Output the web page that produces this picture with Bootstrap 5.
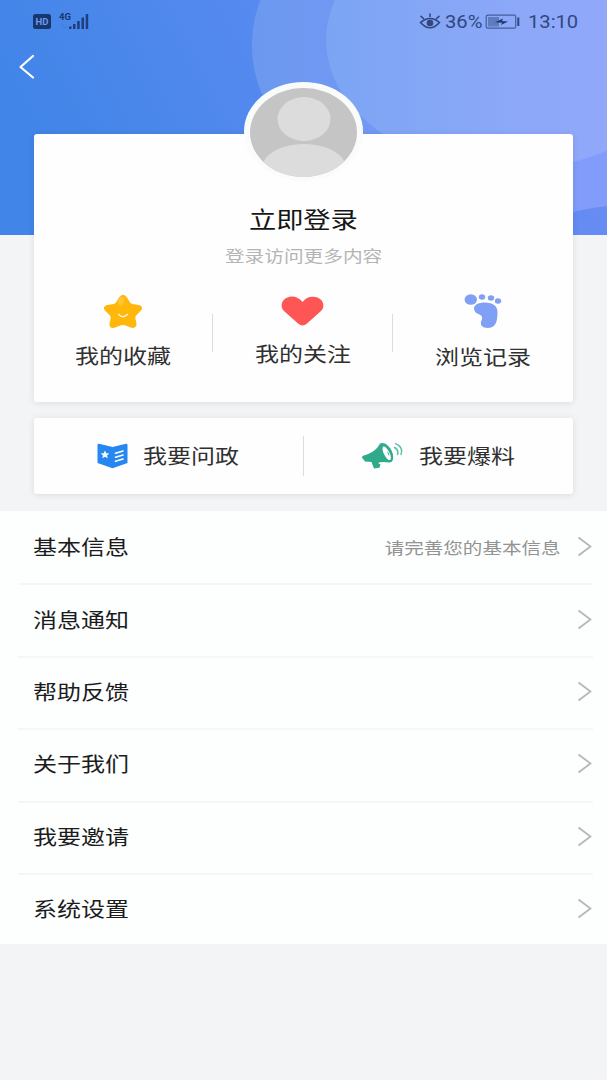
<!DOCTYPE html>
<html lang="zh-CN">
<head>
<meta charset="utf-8">
<meta name="viewport" content="width=device-width, initial-scale=1">
<title>我的</title>
<link href="https://cdn.jsdelivr.net/npm/bootstrap@5.3.0/dist/css/bootstrap.min.css" rel="stylesheet">
<style>
body{background:#f3f4f5;font-family:"Noto Sans CJK SC",sans-serif;color:#222;min-height:1080px;overflow-x:hidden}
svg{display:block;flex:none}
.hero{height:235px;margin-bottom:-101px}
.hero-bg{position:absolute;inset:0}
.status{height:43px;padding:0 34px 0 33px;color:#31477f;font-family:Roboto,sans-serif}
.hd{width:18px;height:15px;border-radius:2.5px;background:#17376f;color:#6d9af0;font:700 9.5px/15px Roboto,sans-serif;text-align:center}
.net{width:15px;height:22px;font:700 9.5px/10px Roboto,sans-serif;color:#17376f;padding-top:1px}
.net small{font-size:6px;line-height:8px;color:#3b66b8;display:block;padding-left:2px}
/* wide lettering: every label is set 1.2 times its normal width */
.wide{display:inline-block;white-space:nowrap;transform:scaleX(1.2);line-height:1}
.wide-s{transform-origin:left}
.wide-e{transform-origin:right}
.stat-txt{font-size:18px;line-height:43px;display:inline-block;transform:scaleX(1.12);transform-origin:left;white-space:nowrap}
.panel{margin:0 34px;border:0;border-radius:3px;background:#fefefe;box-shadow:0 1px 7px rgba(0,0,0,.10)}
.login{height:268px}
.avatar{margin-top:-52px}
.title{font-size:22.7px;color:#161616}
.sub{font-size:16.4px;color:#b5b5b5}
.lbl{font-size:20px;color:#303030}
.rule{width:1px;background:#dcdcdc}
.actions{height:76px;margin-top:16px}
.menu{margin-top:17px;background:#fdfefe;height:433px}
.menu .item{height:72.4px;padding:0 15px 0 33px}
.menu .item+.item{background:linear-gradient(#f5f6f6,#f5f6f6) 18px 0/575px 2px no-repeat}
.menu .lbl{color:#1c1c1c}
.hint{font-size:16.3px;color:#939393}
</style>
</head>
<body>
<header class="hero position-relative">
  <svg class="hero-bg" width="607" height="235" viewBox="0 0 607 235">
    <defs>
      <linearGradient id="g0" x1="0" x2="1" y1=".2" y2="0"><stop offset="0" stop-color="#4285e8"/><stop offset=".45" stop-color="#578af0"/><stop offset="1" stop-color="#6f8df5"/></linearGradient>
      <linearGradient id="g1" x1="0" x2="1"><stop offset="0" stop-color="#6c99ef"/><stop offset=".25" stop-color="#7298f4"/><stop offset="1" stop-color="#829cfa"/></linearGradient>
      <linearGradient id="g2" x1="0" x2="1"><stop offset="0" stop-color="#7ba5f3"/><stop offset=".5" stop-color="#8ca8f8"/><stop offset="1" stop-color="#96a8fc"/></linearGradient>
    </defs>
    <rect width="607" height="235" fill="url(#g0)"/>
    <ellipse cx="480" cy="45" rx="228" ry="168" fill="url(#g1)"/>
    <path d="M560 130H607V206Q585 208 560 216Z" fill="#819cfa"/>
    <ellipse cx="510" cy="40" rx="184" ry="130" fill="url(#g2)"/>
  </svg>
  <div class="status position-relative d-flex align-items-center">
    <div class="hd">HD</div>
    <div class="net ms-2 ps-0">4G<small>↑↓</small></div>
    <svg width="21" height="17" viewBox="0 0 21 17" fill="#1d3f80" style="margin-left:-6px"><path d="M1 13.500h2.500V16H1zM5 11h2.500v5H5zM9.200 8h2.500v8H9.200zM13.500 4.500H16V16h-2.500zM17.700 1h2.500v15h-2.500z"/></svg>
    <div class="ms-auto d-flex align-items-center">
      <svg width="22" height="18" viewBox="0 0 22 18" fill="none" stroke="#31477f" stroke-width="1.600" stroke-linecap="round"><path d="M1.500 9.500Q11 1.500 20.500 9.500Q11 20 1.500 9.500ZM11 3.500V1M4.500 5.500L2 3.300M17.500 5.500L20 3.300"/><circle cx="11" cy="10" r="3.300" fill="#31477f" stroke="none"/></svg>
      <span class="stat-txt ms-1" style="width:40px">36%</span>
      <svg width="36" height="16" viewBox="0 0 36 16"><rect x="1.200" y="1.200" width="29.500" height="13" rx="1.500" fill="none" stroke="#465d9c" stroke-width="1.200"/><path d="M3 3H14V12.500H3Z" fill="#5f7cc0"/><path d="M10 8.300L17 8.800 16 11 23 7.500 17 7 18 4.500Z" fill="#26386e"/><path d="M32.300 3.500h2v8.500h-2z" fill="#31477f"/></svg>
      <span class="stat-txt" style="width:45px;margin-left:7px">13:10</span>
    </div>
  </div>
  <svg class="position-relative ms-3" width="24" height="46" viewBox="0 0 24 46" fill="none" stroke="#fff" stroke-width="2.200" stroke-linecap="round" stroke-linejoin="round"><path d="M17 13L4.500 24 17 34.500"/></svg>
</header>

<main class="position-relative">
  <section class="card panel login align-items-center">
    <svg class="avatar" width="120" height="99" viewBox="0 0 120 99">
      <defs><clipPath id="av"><ellipse cx="59.500" cy="50.500" rx="53.500" ry="44.500"/></clipPath></defs>
      <ellipse cx="59.500" cy="49.500" rx="59.500" ry="49.500" fill="#fafbfb"/>
      <g clip-path="url(#av)"><path d="M0 0h120v99H0z" fill="#c5c5c5"/><ellipse cx="60" cy="37" rx="26.500" ry="22" fill="#dcdcdc"/><ellipse cx="60" cy="86" rx="42" ry="24" fill="#dcdcdc"/></g>
    </svg>
    <div class="wide title" style="margin-top:27px">立即登录</div>
    <div class="wide sub" style="margin-top:16px">登录访问更多内容</div>
    <div class="d-flex w-100 align-items-start" style="margin-top:31px">
      <div class="d-flex flex-column align-items-center" style="width:179px">
        <svg width="40" height="35" viewBox="0 0 40 35"><path d="M16 3.500Q20 -2 24 3.500L27 8.500Q28 10 31 10.300L35.500 11Q41.500 12.500 37.500 17L33 21.500Q32 23 32.500 25L33.500 29.500Q33.500 35.500 27 33.300L22 31.300Q20 30.500 18 31.300L13 33.300Q6 35.500 6.500 29.500L7.500 25Q8 23 7 21.500L2.500 17Q-1.500 12.500 4.500 11L9 10.300Q12 10 13 8.500Z" fill="#feb70a"/><ellipse cx="18" cy="7" rx="3" ry="4" fill="#ffd04e" opacity=".65" transform="rotate(25 18 7)"/><path d="M15.700 20.500Q20 25 24.300 20.500" fill="none" stroke="#fff6d8" stroke-width="1.600" stroke-linecap="round"/></svg>
        <div class="wide lbl" style="margin-top:17px">我的收藏</div>
      </div>
      <i class="rule" style="height:38px;margin-top:20px"></i>
      <div class="d-flex flex-column align-items-center" style="width:179px">
        <svg width="43" height="35" viewBox="0 0 43 35"><path d="M21.500 8Q17 2.500 11 2.500C1 3 -2 12 3 17L17 29.500Q21.500 33.500 26 29.500L40 17C45 12 42 3 32 2.800Q26 2.500 21.500 8Z" fill="#fd5655"/></svg>
        <div class="wide lbl" style="margin-top:15px">我的关注</div>
      </div>
      <i class="rule" style="height:38px;margin-top:20px"></i>
      <div class="d-flex flex-column align-items-center" style="width:181px">
        <svg width="38" height="35" viewBox="0 0 38 35" fill="#7fa0f5"><ellipse cx="6.800" cy="5.500" rx="6.200" ry="5.300"/><ellipse cx="18" cy="3" rx="3.200" ry="2.700"/><ellipse cx="27" cy="4" rx="3.200" ry="2.700"/><ellipse cx="34" cy="7" rx="3.200" ry="2.700"/><path d="M10 14.500C10 10.500 15 8.500 21 8.500C29 8.500 34 12 33.500 19C33.300 25 33 34 24 34C18 34 15.500 30.500 17.500 26.500C19 23 17.500 21.500 15.500 20.500C12 19.300 10 17.500 10 14.500Z"/></svg>
        <div class="wide lbl" style="margin-top:18px">浏览记录</div>
      </div>
    </div>
  </section>

  <section class="panel actions d-flex align-items-center">
    <div class="d-flex align-items-center" style="width:269px;padding-left:63px">
      <svg width="31" height="26" viewBox="0 0 31 26"><path d="M.500 2Q.500 .500 2 .800L15.500 4 29 .800Q30.500 .500 30.500 2V20L15.500 25.300 .500 20Z" fill="#2587f0"/><path d="M8 7.500L9.300 10.300 12.300 10.500 10 12.500 10.800 15.300 8 13.800 5.200 15.300 6 12.500 3.700 10.500 6.700 10.300Z" fill="#fff"/><path d="M18.500 10.200L26 8M18.500 14.200L26 12M18.500 18.200L26 16" stroke="#fff" stroke-width="1.600" stroke-linecap="round"/></svg>
      <div class="wide wide-s lbl" style="margin-left:15px">我要问政</div>
    </div>
    <i class="rule" style="height:40px"></i>
    <div class="d-flex align-items-center" style="padding-left:57px">
      <svg width="42" height="28" viewBox="0 0 42 28"><path d="M19 1.500Q21 .300 24 1.500C30 5 33 12 32 17Q31.500 20.500 28 20.500Q22 19.500 17.500 20.500L18 22 19.500 22.300 18.500 25.800 13 26.500 10.500 20 4 19.500 .800 15.300 2 13.800C9 12 16 8 19 1.500Z" fill="#2fab8c"/><ellipse cx="25.700" cy="11.300" rx="2.800" ry="7.500" transform="rotate(-27 25.700 11.300)" fill="#fff"/><path d="M26 9.500Q29 11 28 14Z" fill="#2fab8c"/><path d="M33.500 5.500Q38 7.500 36.500 12.500M34.500 1.700Q42.500 5 40 12.500" fill="none" stroke="#5cbda5" stroke-width="1.400" stroke-linecap="round"/></svg>
      <div class="wide wide-s lbl" style="margin-left:16px">我要爆料</div>
    </div>
  </section>

  <nav class="menu">
    <div class="item d-flex align-items-center justify-content-between"><span class="wide wide-s lbl">基本信息</span><span class="d-flex align-items-center"><span class="wide wide-e hint me-3">请完善您的基本信息</span><svg class="chev" width="15" height="22"><use href="#chev"/></svg></span></div>
    <div class="item d-flex align-items-center justify-content-between"><span class="wide wide-s lbl">消息通知</span><svg width="15" height="22"><use href="#chev"/></svg></div>
    <div class="item d-flex align-items-center justify-content-between"><span class="wide wide-s lbl">帮助反馈</span><svg width="15" height="22"><use href="#chev"/></svg></div>
    <div class="item d-flex align-items-center justify-content-between"><span class="wide wide-s lbl">关于我们</span><svg width="15" height="22"><use href="#chev"/></svg></div>
    <div class="item d-flex align-items-center justify-content-between"><span class="wide wide-s lbl">我要邀请</span><svg width="15" height="22"><use href="#chev"/></svg></div>
    <div class="item d-flex align-items-center justify-content-between"><span class="wide wide-s lbl">系统设置</span><svg width="15" height="22"><use href="#chev"/></svg></div>
  </nav>
</main>
<svg class="d-none"><symbol id="chev" viewBox="0 0 15 22"><path d="M1.500 1.500L13.500 10.500 1.500 19.500" fill="none" stroke="#b5b5b5" stroke-width="1.700"/></symbol></svg>
<script src="https://cdn.jsdelivr.net/npm/bootstrap@5.3.0/dist/js/bootstrap.bundle.min.js"></script>
</body>
</html>
